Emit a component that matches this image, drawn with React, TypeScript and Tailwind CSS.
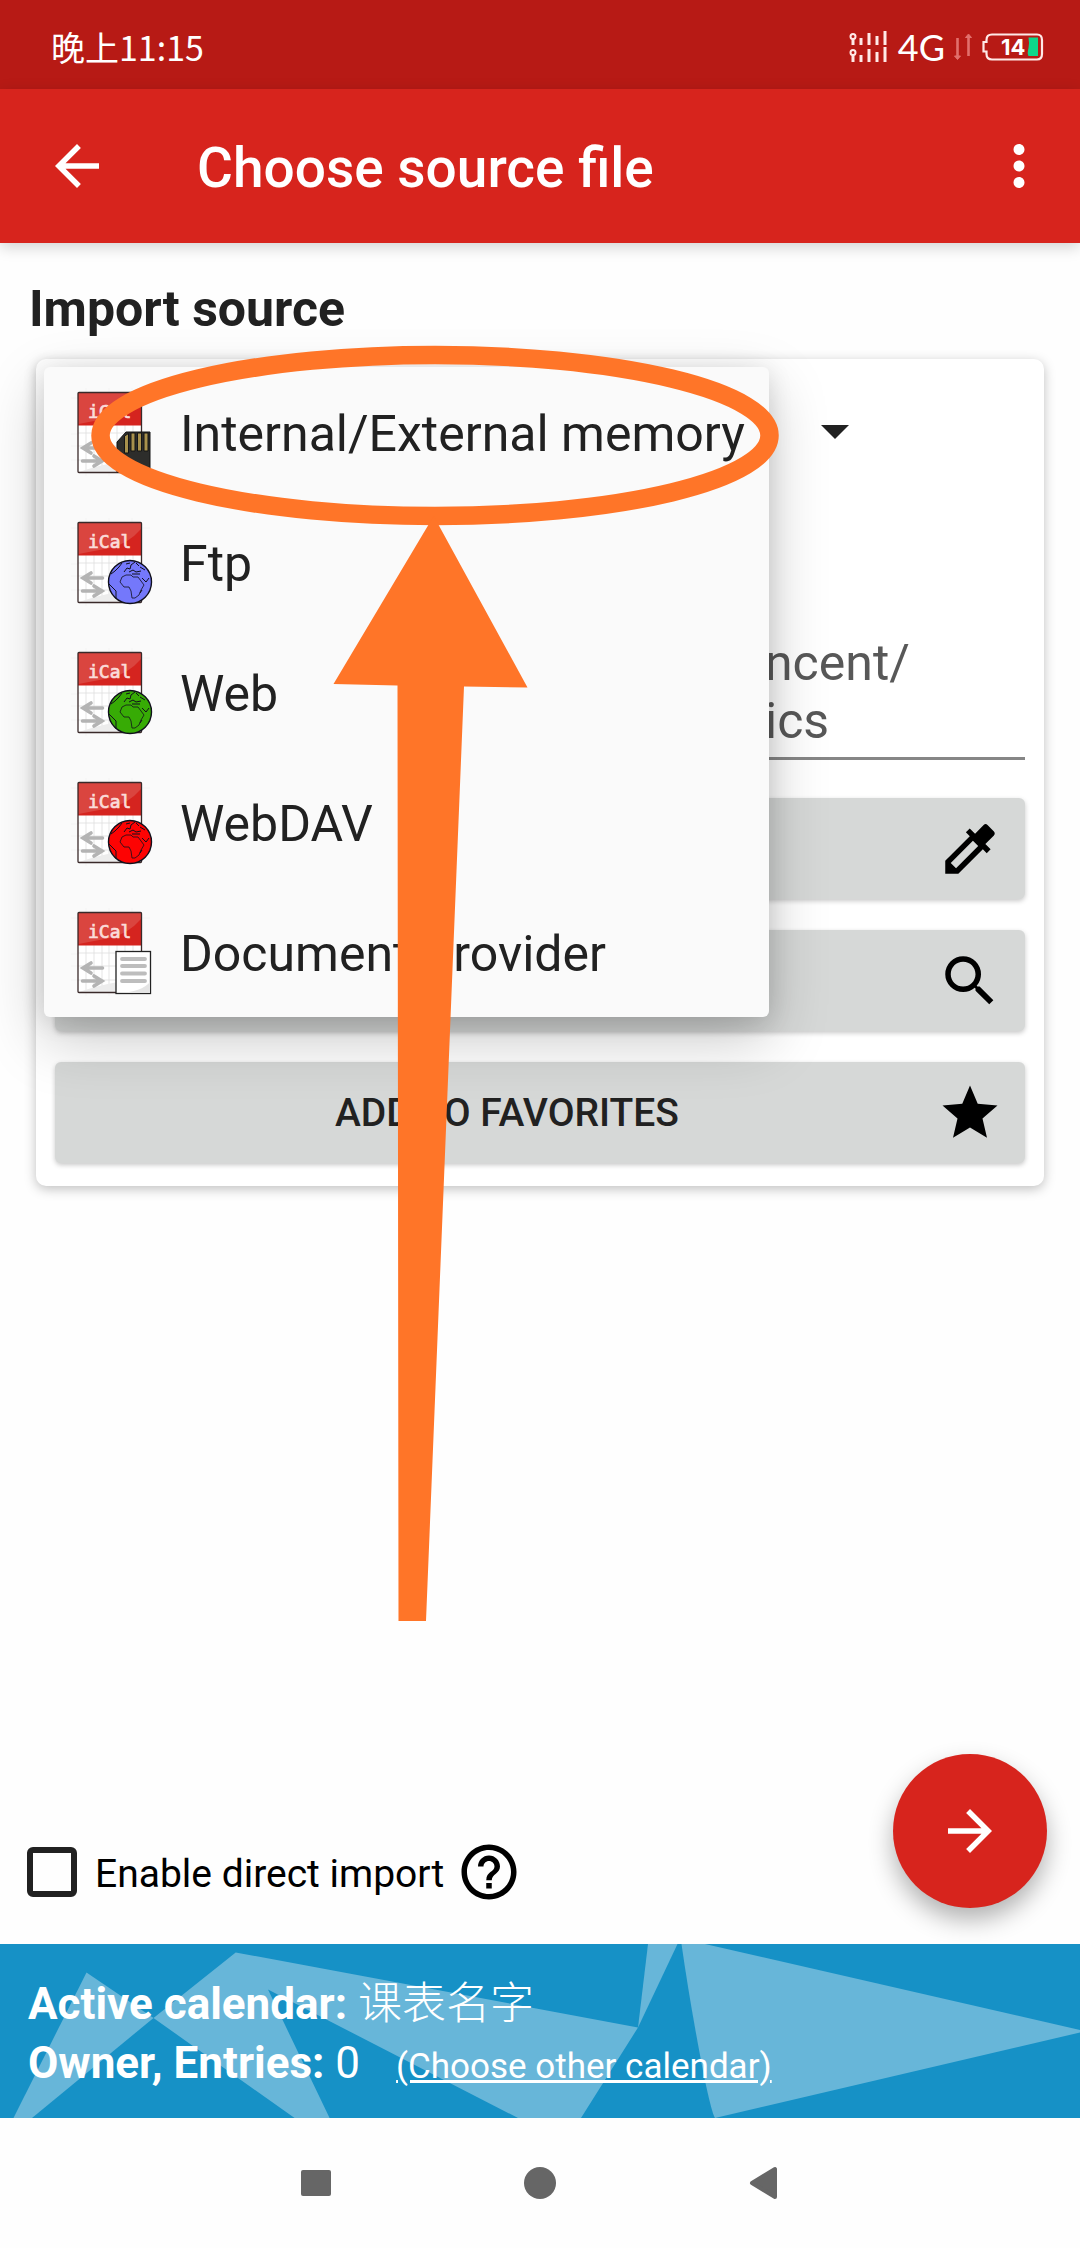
import React from "react";
import {
  MdArrowBack,
  MdArrowForward,
  MdColorize,
  MdHelpOutline,
  MdMoreVert,
  MdSearch,
  MdStar,
} from "react-icons/md";

type Badge = "card" | "blue" | "green" | "red" | "document";

const sources: { label: string; badge: Badge; selected: boolean }[] = [
  { label: "Internal/External memory", badge: "card", selected: true },
  { label: "Ftp", badge: "blue", selected: false },
  { label: "Web", badge: "green", selected: false },
  { label: "WebDAV", badge: "red", selected: false },
  { label: "Document Provider", badge: "document", selected: false },
];

const globeColors = { blue: "#7478fb", green: "#37ab05", red: "#fd0303" };

function Globe({ color }: { color: string }) {
  return (
    <g stroke="#10101c" strokeLinejoin="round">
      <circle cx="64" cy="68" r="21.5" fill={color} strokeWidth="1.4" />
      <path
        d="M54 68 L56 63 L60 61 L65 61 L67 63 L72 63 L75 67 L78 71 L75 76 L73 81 L69 84 L66 84 L65 77 L63 73 L58 73 Z"
        fill="none"
        strokeWidth="0.8"
      />
      <path
        d="M58 58 l3 -4 l3 1 l1 -4 l4 -3 M60 50 l4 -1 M63 58 l4 -2 l3 2 l5 -1 M66 60 h8 M45 60 l4 -3 l4 -4 l3 -4 M43 70 l4 4 l3 3 v8 M76 64 l4 4 l3 -4 M74 53 l5 3 M70 49 l3 3 M74 79 l2 -3"
        fill="none"
        strokeWidth="1"
      />
    </g>
  );
}

function SourceIcon({ badge }: { badge: Badge }) {
  return (
    <svg viewBox="0 0 96 96" className="size-24 shrink-0" aria-hidden="true">
      <path d="M5 14 H84 M5 50 H84 M5 62 H84 M5 76 H84 M20 4 V92 M43 4 V92 M66 4 V92" stroke="#f4f4f4" />
      <rect x="12" y="8.5" width="63.5" height="80" fill="#ffffff" />
      <path d="M20 41 V88 M28 41 V88 M36 41 V88 M43 41 V88 M51 41 V88 M59 41 V88 M67 41 V88 M12 49 H76 M12 62 H76 M12 76 H76" stroke="#dedede" strokeWidth="0.8" />
      <path d="M13 88 Q34 81 52 78 Q66 76 75 66 V88 Z" fill="#ececec" />
      <rect x="12" y="8.5" width="63.5" height="33" fill="#d5241f" />
      <path d="M12.5 9 H75 V15 Q62 30 44 34 Q28 37 12.5 40 Z" fill="#da453f" />
      <rect x="12" y="8.5" width="63.5" height="80" rx="1" fill="none" stroke="#3a2a2a" strokeWidth="1.3" />
      <text x="22" y="33.500" fontFamily="'DejaVu Sans Mono', monospace" fontSize="18" fill="#fbdcda" stroke="#fbdcda" strokeWidth="0.7">
        iCal
      </text>
      <g fill="none" stroke="#b4b4b4" strokeWidth="3.600" strokeLinecap="round">
        <path d="M36.500 64 H18 M25 59 L17 64 L25 69" />
        <path d="M16.500 77 H35 M28 72 L36 77 L28 82" />
      </g>
      {badge === "card" && (
        <g stroke="#151515">
          <path d="M60 48 H84 V88 H51 V58 Z" fill="#2d2d2b" />
          <path d="M58.500 52 l4 -2.500 V69 h-4 Z M65 49 h4 v18 h-4 Z M71.500 49 h4 v18 h-4 Z M78 49 h4 v18 h-4 Z" fill="#a8914c" />
        </g>
      )}
      {(badge === "blue" || badge === "green" || badge === "red") && <Globe color={globeColors[badge]} />}
      {badge === "document" && (
        <g>
          <rect x="50" y="47.500" width="34.500" height="42" fill="#ffffff" stroke="#222222" strokeWidth="1.3" />
          <path d="M52 89 Q76 88 84 78 V89 Z" fill="#e4e4e4" />
          <path d="M56 55 H79 M56 62 H79 M56 69.500 H79 M56 77 H79" stroke="#bdbdbd" strokeWidth="3.800" strokeLinecap="round" />
        </g>
      )}
    </svg>
  );
}

function SignalIcon() {
  return (
    <svg viewBox="0 0 38 32" className="h-8 w-[38px]" aria-hidden="true">
      <g fill="none" stroke="#ffe9e7" strokeWidth="3">
        <circle cx="4" cy="5.500" r="2.500" strokeWidth="2" />
        <circle cx="4" cy="21.500" r="2.500" strokeWidth="2" />
        <path d="M4 8 V14 M12 7 V14 M20 2 V14 M28 5 V14 M36 0 V14" />
        <path d="M4 24 V31 M12 24 V31 M20 18 V31 M28 21 V31 M36 16 V31" />
      </g>
    </svg>
  );
}

function DataArrowsIcon() {
  return (
    <svg viewBox="0 0 20 28" className="h-7 w-5" aria-hidden="true">
      <g stroke="#e2706c" strokeWidth="2.600" fill="#e2706c">
        <path d="M4.500 5 V23" />
        <path d="M15.500 5 V23" />
        <path d="M1.500 23 h6 l-3 3.500 Z M12.500 4.500 h6 l-3 -3.500 Z" strokeWidth="1" />
      </g>
    </svg>
  );
}

function BatteryIcon() {
  return (
    <svg viewBox="0 0 62 28" className="h-7 w-[62px]" role="img" aria-label="Battery 14 percent">
      <path
        d="M4.500 9 V7 Q4.500 1.500 10 1.500 H55 Q60 1.500 60 7 V21 Q60 26.500 55 26.500 H10 Q4.500 26.500 4.500 21 V18.500 H1.500 V9 Z"
        fill="none"
        stroke="#ffe9e7"
        strokeWidth="2.200"
      />
      <path d="M46.500 4.500 H56 V23 H46.500 Q45 20 46.500 15 Q47.500 10 46.500 4.500 Z" fill="#0fd68a" />
      <text x="19" y="22" fontFamily="Inter, sans-serif" fontWeight="700" fontSize="22" fill="#ffffff">
        14
      </text>
    </svg>
  );
}

function StatusBar() {
  return (
    <div className="flex h-[89px] items-center justify-between bg-[#b71a15] pt-1 pr-9 pl-[51px] text-white">
      <span className="font-['Noto_Sans_CJK_SC',sans-serif] text-[34px] leading-10">晚上11:15</span>
      <div className="flex items-center">
        <SignalIcon />
        <span className="ml-[11px] font-[Lato,sans-serif] text-[36px] leading-10">4G</span>
        <span className="ml-2">
          <DataArrowsIcon />
        </span>
        <span className="ml-[9px]">
          <BatteryIcon />
        </span>
      </div>
    </div>
  );
}

function ActionButton({ name, text, icon }: { name: string; text?: string; icon: React.ReactNode }) {
  return (
    <button
      type="button"
      aria-label={name}
      className="flex h-[101px] w-full items-center rounded-md bg-[#d6d8d7] px-[22px] text-[39px] leading-[44px] font-medium text-[#212121] shadow-[0_2px_5px_rgba(0,0,0,0.22)]"
    >
      <span className="flex-1 text-center">{text}</span>
      <span className="text-[66px] text-black">{icon}</span>
    </button>
  );
}

function Annotation() {
  return (
    <svg
      viewBox="0 0 1080 2248"
      className="pointer-events-none absolute top-0 left-0 z-20 h-[2248px] w-[1080px]"
      aria-hidden="true"
    >
      <ellipse cx="435" cy="435.500" rx="334.500" ry="80.500" fill="none" stroke="#ff7528" strokeWidth="18.500" />
      <path d="M433.700 516 L527.500 687.500 L464 686.500 L426 1621 H398.500 L397.500 685.500 L333.500 684 Z" fill="#ff7528" />
    </svg>
  );
}

export default function App() {
  return (
    <div className="relative flex min-h-screen flex-col overflow-x-hidden bg-[#fefefe] font-[Roboto,'Noto_Sans_CJK_SC',sans-serif] text-[#212121]">
      <StatusBar />
      <header className="relative flex h-[154px] items-center bg-[#d7241d] pr-7 pl-11 text-white shadow-[0_4px_14px_rgba(0,0,0,0.18)]">
        <button type="button" aria-label="Back" className="text-[66px]">
          <MdArrowBack />
        </button>
        <h1 className="ml-[87px] flex-1 pt-1 text-[55px] leading-[64px] font-medium">Choose source file</h1>
        <button type="button" aria-label="More options" className="text-[66px]">
          <MdMoreVert />
        </button>
      </header>

      <main className="flex flex-1 flex-col">
        <h2 className="mt-9 px-[29px] text-[50px] leading-[60px] font-bold">Import source</h2>

        <section className="relative mx-9 mt-5 rounded-[10px] bg-white px-[19px] pt-2 pb-[23px] shadow-[0_3px_12px_rgba(0,0,0,0.25)]">
          <div className="flex h-[130px] items-center">
            <select
              aria-label="Import source"
              className="h-full w-[760px] appearance-none bg-transparent pl-[126px] text-[50px] text-transparent"
            >
              {sources.map((s) => (
                <option key={s.label}>{s.label}</option>
              ))}
            </select>
            <svg viewBox="0 0 28 14" className="ml-[6px] h-[14px] w-7" aria-hidden="true">
              <path d="M0 0 H28 L14 14 Z" fill="#212121" />
            </svg>
          </div>

          <textarea
            aria-label="File path"
            rows={2}
            defaultValue={"ncent/\nics"}
            className="mt-[137px] block h-[126px] w-full resize-none overflow-hidden border-b-[3px] border-[#868686] bg-transparent pl-[710px] text-[50px] leading-[58px] text-[#585858]"
          />

          <div className="mt-[38px] flex flex-col gap-[31px]">
            <ActionButton name="Pick file" icon={<MdColorize />} />
            <ActionButton name="Search file" icon={<MdSearch />} />
            <ActionButton name="Add to favorites" text="ADD TO FAVORITES" icon={<MdStar />} />
          </div>

          <ul
            role="listbox"
            aria-label="Import sources"
            className="absolute top-2 left-2 z-10 w-[725px] rounded-md bg-[#fafafa] shadow-[0_22px_60px_rgba(0,0,0,0.22),0_4px_24px_rgba(0,0,0,0.12)]"
          >
            {sources.map((s) => (
              <li key={s.label} role="option" aria-selected={s.selected}>
                <button type="button" className="flex h-[130px] w-full items-center gap-[18px] pl-[22px] text-[50px] leading-[58px]">
                  <SourceIcon badge={s.badge} />
                  <span className="pt-1">{s.label}</span>
                </button>
              </li>
            ))}
          </ul>
        </section>

        <div className="mt-auto flex items-end justify-between pr-[33px] pb-9 pl-[27px]">
          <div className="mb-[3px] flex h-[66px] items-center text-[39px] leading-[44px] text-black">
            <input
              id="direct"
              type="checkbox"
              className="size-[50px] appearance-none rounded-md border-[6px] border-[#212121]"
            />
            <label htmlFor="direct" className="ml-[18px] pt-1">
              Enable direct import
            </label>
            <button type="button" aria-label="Help" className="ml-3 text-[66px]">
              <MdHelpOutline />
            </button>
          </div>
          <button
            type="button"
            aria-label="Next"
            className="flex size-[154px] items-center justify-center rounded-full bg-[#d7241d] text-[66px] text-white shadow-[0_12px_24px_rgba(0,0,0,0.3)]"
          >
            <MdArrowForward />
          </button>
        </div>
      </main>

      <footer>
        <div className="relative h-[174px] bg-[#1691c6] px-7 pt-[27px] text-[44px] leading-[59px] text-white">
          <svg viewBox="0 0 1080 174" preserveAspectRatio="none" className="absolute inset-0 size-full" aria-hidden="true">
            <g fill="#67b6d9">
              <path d="M86.500 28.500 L153.500 74 L32 174 H13.500 Z" />
              <path d="M235.700 8.400 L638 83.500 L581 174 H518 L268 45.500 L329.600 174 H294.600 L153.500 74 Z" />
              <path d="M648 0 H677.500 L638 83.500 Z" />
              <path d="M681.500 0 H705 L1080 86 V88.500 L715 174 Q712 170 704 132 Q690 60 681.500 0 Z" />
            </g>
          </svg>
          <div className="relative">
            <p>
              <strong className="font-bold">Active calendar:</strong>{" "}
              <span className="font-['Noto_Sans_CJK_SC',sans-serif] font-light">课表名字</span>
            </p>
            <p>
              <strong className="font-bold">Owner, Entries:</strong> <span>0</span>
              <a href="#calendars" className="ml-9 text-[35px] underline">
                (Choose other calendar)
              </a>
            </p>
          </div>
        </div>
        <nav className="flex h-[130px] items-center justify-center gap-[158px]">
          <button type="button" aria-label="Recent apps" className="size-[66px]">
            <svg viewBox="0 0 66 66">
              <rect x="18" y="20" width="30" height="26" rx="2" fill="#666666" />
            </svg>
          </button>
          <button type="button" aria-label="Home" className="size-[66px]">
            <svg viewBox="0 0 66 66">
              <circle cx="33" cy="33" r="16" fill="#666666" />
            </svg>
          </button>
          <button type="button" aria-label="Go back" className="size-[66px]">
            <svg viewBox="0 0 66 66">
              <path d="M21 33 L44 19 V47 Z" fill="#666666" stroke="#666666" strokeWidth="4" strokeLinejoin="round" />
            </svg>
          </button>
        </nav>
      </footer>
      <Annotation />
    </div>
  );
}
